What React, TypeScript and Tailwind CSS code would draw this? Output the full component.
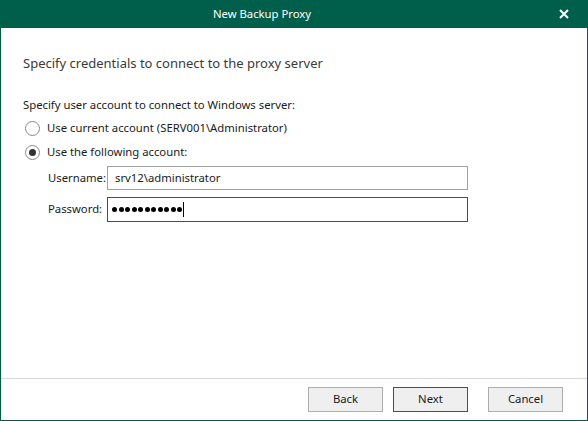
import React from 'react';

const font = { fontFamily: '"Segoe UI", "Noto Sans", "Open Sans", sans-serif' };

const Radio: React.FC<{ checked?: boolean; label: string }> = ({ checked, label }) => (
  <div className="flex items-center h-6">
    <span className="w-[15px] h-[15px] rounded-full border border-[#8c8c8c] bg-white flex items-center justify-center">
      {checked && <span className="w-[7px] h-[7px] rounded-full bg-[#333333]" />}
    </span>
    <span className="ml-[7px] text-[11.3px] text-[#1a1a1a]">{label}</span>
  </div>
);

const App: React.FC = () => {
  return (
    <div className="w-[588px] h-[421px] flex flex-col bg-white text-[#1a1a1a]" style={font}>
      <div className="h-[28px] bg-[#005f4b] flex items-center relative shrink-0">
        <div className="flex-1 text-center text-white text-[11.3px] pr-[64px]">New Backup Proxy</div>
        <svg className="absolute right-[19px] top-[9px]" width="10" height="10" viewBox="0 0 10 10">
          <path d="M1 1 L9 9 M9 1 L1 9" stroke="white" strokeWidth="2" />
        </svg>
      </div>

      <div className="flex-1 flex flex-col border-x border-[#005f4b]">
        <div className="flex-1 pl-[22px] pt-[25px]">
          <div className="text-[13px] leading-[20px] text-[#3a3a3a]">Specify credentials to connect to the proxy server</div>

          <div className="mt-[24px] text-[11.3px] leading-[16px]">Specify user account to connect to Windows server:</div>
          <div className="mt-[3px] pl-[2px]">
            <Radio label="Use current account (SERV001\Administrator)" />
            <Radio checked label="Use the following account:" />
          </div>

          <div className="pl-[25px] mt-[2px] flex flex-col gap-[7px]">
            <div className="flex items-center h-[24px]">
              <span className="w-[59px] text-[11.3px]">Username:</span>
              <div className="w-[361px] h-[24px] border border-[#a0a0a0] flex items-center pl-[7px] text-[11.3px]">
                srv12\administrator
              </div>
            </div>
            <div className="flex items-center h-[25px]">
              <span className="w-[59px] text-[11.3px]">Password:</span>
              <div className="w-[361px] h-[25px] border border-[#0063b1] flex items-center pl-[4px]">
                <div className="flex gap-[1.5px] items-center">
                  {Array.from({ length: 11 }).map((_, i) => (
                    <span key={i} className="w-[5px] h-[5px] rounded-full bg-black" />
                  ))}
                </div>
                <span className="ml-[1px] w-px h-[15px] bg-black" />
              </div>
            </div>
          </div>
        </div>

        <div className="h-[42px] border-t border-[#d9d9d9] flex items-start pt-[8px] pl-[307px] shrink-0">
          <button className="w-[75px] h-[25px] bg-[#efefef] border border-[#adadad] text-[11.3px]">Back</button>
          <button className="ml-[10px] w-[75px] h-[25px] bg-[#efefef] border border-[#0063b1] text-[11.3px]">Next</button>
          <button className="ml-[20px] w-[75px] h-[25px] bg-[#efefef] border border-[#adadad] text-[11.3px]">Cancel</button>
        </div>
      </div>
      <div className="h-px bg-[#005f4b] shrink-0" />
    </div>
  );
};

export default App;
